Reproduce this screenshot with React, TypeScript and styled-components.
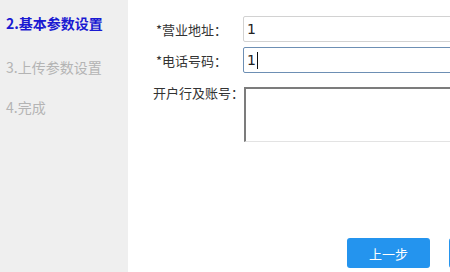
import styled, { createGlobalStyle, css } from "styled-components";

const GlobalStyle = createGlobalStyle`
  html, body {
    margin: 0;
    padding: 0;
    background: #ffffff;
    overflow: hidden;
  }
  body {
    font-family: "Noto Sans CJK SC", "Noto Sans", sans-serif;
  }
`;

const Page = styled.div`
  display: flex;
  width: 450px;
  height: 272px;
  overflow: hidden;
`;

const Sidebar = styled.div`
  flex: 0 0 128px;
  background-color: #efefef;
  display: flex;
  flex-direction: column;
  padding-top: 3px;
`;

const StepItem = styled.div<{ $active?: boolean }>`
  height: 40px;
  line-height: 40px;
  padding-left: 6px;
  margin-bottom: ${(p) => (p.$active ? "4px" : "0")};
  font-size: 14px;
  white-space: nowrap;
  color: ${(p) => (p.$active ? "#1a1ad2" : "#b4b4b4")};
  font-weight: ${(p) => (p.$active ? "bold" : "normal")};
`;

const Main = styled.div`
  flex: 0 0 auto;
  width: 480px;
  display: flex;
  flex-direction: column;
  padding: 16px 0 0 25px;
`;

const FormRow = styled.div<{ $top?: boolean; $gap: number }>`
  display: flex;
  align-items: ${(p) => (p.$top ? "flex-start" : "center")};
  margin-bottom: ${(p) => p.$gap}px;
`;

const Label = styled.div<{ $required?: boolean }>`
  flex: 0 0 90px;
  font-size: 13px;
  color: #333333;
  white-space: nowrap;
  padding-left: ${(p) => (p.$required ? "3px" : "0")};
  box-sizing: border-box;
  line-height: 14px;
  margin-top: ${(p) => (p.$required ? "2px" : "-1px")};
`;

const Field = styled.div<{ $focused?: boolean }>`
  width: 240px;
  height: 26px;
  box-sizing: border-box;
  border: 1px solid #d2d2d2;
  border-radius: 2px;
  padding: 0 3px;
  display: flex;
  align-items: center;
  font-size: 14px;
  color: #222222;
  font-family: "DejaVu Sans", "Noto Sans", sans-serif;
  ${(p) =>
    p.$focused &&
    css`
      border-color: #6d8fb4;
    `}
`;

const Caret = styled.span`
  display: inline-block;
  width: 1px;
  height: 17px;
  margin-left: 1px;
  background: #111111;
`;

const TextArea = styled.textarea`
  width: 240px;
  height: 55px;
  box-sizing: border-box;
  border-style: solid;
  border-width: 2px 1px 1px 2px;
  border-color: #7c7c7c #e3e3e3 #e3e3e3 #7c7c7c;
  resize: none;
  padding: 2px;
  margin: 0;
  outline: none;
  font-size: 13px;
`;

const ButtonRow = styled.div`
  display: flex;
  gap: 19px;
  margin-top: 96px;
  padding-left: 194px;
`;

const Button = styled.button`
  flex: 0 0 auto;
  width: 83px;
  height: 30px;
  border: none;
  border-radius: 3px;
  background-color: #2494ee;
  color: #ffffff;
  font-size: 13px;
  font-family: "Noto Sans CJK SC", sans-serif;
  padding: 0;
  cursor: pointer;
`;

const steps = [
  { key: "2", text: "2.基本参数设置", active: true },
  { key: "3", text: "3.上传参数设置", active: false },
  { key: "4", text: "4.完成", active: false },
];

function App() {
  return (
    <>
      <GlobalStyle />
      <Page>
        <Sidebar>
          {steps.map((s) => (
            <StepItem key={s.key} $active={s.active}>
              {s.text}
            </StepItem>
          ))}
        </Sidebar>
        <Main>
          <FormRow $gap={5}>
            <Label $required>*营业地址：</Label>
            <Field>1</Field>
          </FormRow>
          <FormRow $gap={14}>
            <Label $required>*电话号码：</Label>
            <Field $focused>
              1
              <Caret />
            </Field>
          </FormRow>
          <FormRow $top $gap={0}>
            <Label>开户行及账号：</Label>
            <TextArea />
          </FormRow>
          <ButtonRow>
            <Button>上一步</Button>
            <Button>下一步</Button>
          </ButtonRow>
        </Main>
      </Page>
    </>
  );
}

export default App;
